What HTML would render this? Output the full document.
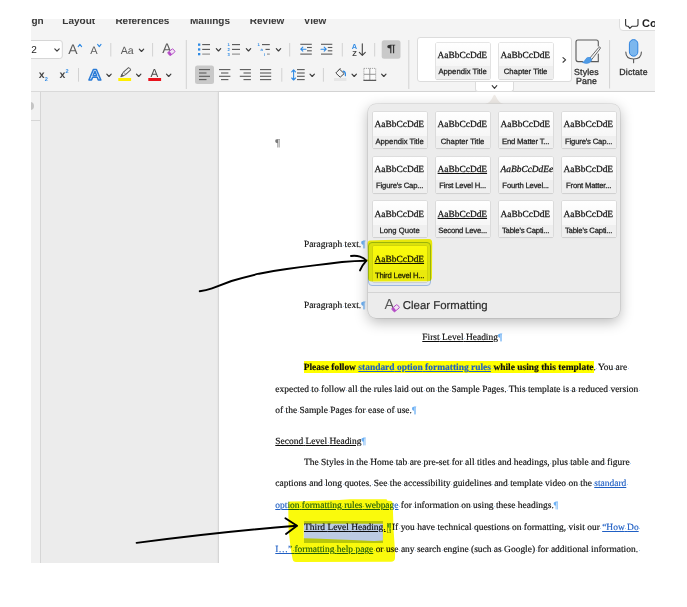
<!DOCTYPE html>
<html lang="en"><head><meta charset="utf-8"><title>Word styles gallery</title>
<style>
*{box-sizing:border-box}
html,body{margin:0;padding:0}
body{text-rendering:geometricPrecision;width:687px;height:607px;background:#fff;position:relative;overflow:hidden;font-family:"Liberation Sans",sans-serif}
#shot{position:absolute;left:0;top:0;width:687px;height:607px;clip-path:inset(19px 32px 44px 31px);background:#ececec}
.abs{position:absolute}
#ribbon{left:31px;top:19px;width:624px;height:72px;background:#f4f4f4}
#ribline{left:31px;top:91px;width:624px;height:1px;background:#d9d9d9}
.tab{top:14.9px;font-weight:bold;font-size:10px;color:#3a3a3a;white-space:nowrap;line-height:14px}
#ruler{left:31px;top:92px;width:9px;height:471px;background:#f1f1f1}
#rulerline{left:40px;top:92px;width:1px;height:471px;background:#d6d6d6}
#page{left:219px;top:92px;width:440px;height:475px;background:#fff;box-shadow:-.6px 0 0 #d0d0d0,-1.5px 0 2px rgba(0,0,0,.08)}
.t{position:absolute;white-space:pre;font-family:"Liberation Serif",serif;font-size:9.46px;line-height:12px;color:#0c0c0c;-webkit-text-stroke-width:.15px}
.t u{text-decoration-thickness:0.6px;text-underline-offset:1px}
.pm{color:#6cb0f4}
.lk{color:#1f5fc4;text-decoration:underline;text-decoration-thickness:0.6px;text-underline-offset:1px}
.hl{background:#ffff00;padding:2px 0 0}
.sp{background:linear-gradient(#a6d0f8,#a6d0f8) 50% 56%/1px 1px no-repeat}
.pmb{color:#5aa0ee;box-shadow:inset 0 0 0 .6px #707a10;margin:0 -1.6px 0 1.2px}
.sel{background:#b9c9de}
#gal{left:416.8px;top:36.8px;width:155.4px;height:45.7px;background:#fff;border:1px solid #dcdcdc;border-radius:3px}
#galtab{left:475px;top:81.5px;width:38.5px;height:10.5px;background:#fff;border:1px solid #dcdcdc;border-top:none;border-radius:0 0 3px 3px}
#pop{left:368px;top:103.5px;width:252px;height:214px;background:#ececec;border-radius:8px;box-shadow:0 4px 14px rgba(0,0,0,.28),0 0 0 .5px rgba(0,0,0,.14)}
#poparrow{left:484.5px;top:94.3px;width:19px;height:9.5px}
.tile{position:absolute;width:54px;height:36px;background:linear-gradient(#fff,#f7f7f7 62%);border-radius:1px;box-shadow:0 0 0 .6px #d0d0d0,0 .6px .8px rgba(0,0,0,.12);overflow:hidden}
.tile .pv{position:absolute;left:2px;top:0;width:60px;height:23px;text-align:left;font-family:"Liberation Serif",serif;font-size:9.4px;line-height:12px;padding-top:7.4px;color:#111;white-space:nowrap;-webkit-text-stroke-width:.25px}
.tile .pv u{text-decoration-thickness:.8px;text-underline-offset:1px}
.tile .lb{position:absolute;left:-3px;top:23.9px;width:60px;height:13px;background:#efefef;text-align:center;font-size:7.7px;line-height:12px;padding-top:0;color:#1c1c1c;white-space:nowrap;-webkit-text-stroke-width:.25px}
.rl{font-size:8.8px;line-height:8.8px;color:#2e2e2e;-webkit-text-stroke-width:.3px;text-align:center;white-space:nowrap;letter-spacing:.15px}
#popsep{left:368px;top:291.5px;width:252px;height:1px;background:#d4d4d4}
#clearfmt{left:402.8px;top:299px;font-size:11.4px;line-height:14px;color:#2c2c2c;white-space:nowrap;-webkit-text-stroke-width:.2px}
#cobtn{left:619px;top:10px;width:46px;height:21px;background:#fff;border:1px solid #dedede;border-radius:0 0 0 4px}
#cotxt{left:642px;top:17.6px;font-size:11px;line-height:12px;font-weight:bold;color:#222}
</style></head>
<body>
<div id="shot">
<div id="ribbon" class="abs"></div>
<div id="ribline" class="abs"></div>
<div class="abs tab" style="left:31.5px">gn</div>
<div class="abs tab" style="left:62.3px">Layout</div>
<div class="abs tab" style="left:115.4px">References</div>
<div class="abs tab" style="left:190px">Mailings</div>
<div class="abs tab" style="left:249.8px">Review</div>
<div class="abs tab" style="left:303.7px">View</div>
<div id="ruler" class="abs"></div><div id="rulerline" class="abs"></div>
<div class="abs" style="left:31px;top:120px;width:9px;height:1px;background:#d6d6d6"></div>
<div class="abs" style="left:26px;top:102px;width:8px;height:8px;border-radius:4px;background:#c4c4c4"></div>
<div id="page" class="abs"></div>
<div id="gal" class="abs"></div><div id="galtab" class="abs"></div>
<div class="tile " style="left:435.6px;top:42.6px"><div class="pv">AaBbCcDdE</div><div class="lb">Appendix Title</div></div>
<div class="tile " style="left:498.6px;top:42.6px"><div class="pv">AaBbCcDdE</div><div class="lb">Chapter Title</div></div>
<div class="abs rl" style="left:566px;top:68.3px;width:41px">Styles<br>Pane</div>
<div class="abs rl" style="left:613px;top:68.3px;width:41px">Dictate</div>
<div id="cobtn" class="abs"></div><div id="cotxt" class="abs">Co</div>
<svg class="abs" style="left:0;top:0" width="687" height="607" viewBox="0 0 687 607" font-family="Liberation Sans, sans-serif">
<rect x="20" y="40.5" width="42.3" height="18" rx="2.5" fill="#fff" stroke="#d6d6d6" stroke-width="1"/>
<text x="31.2" y="53.4" font-size="10" fill="#222">2</text>
<polyline points="54.80,48.80 57.00,51.20 59.20,48.80" fill="none" stroke="#3c3c3c" stroke-width="1.15" stroke-linecap="round" stroke-linejoin="round"/>
<text x="68.3" y="53.6" font-size="14" fill="#5c5c5c">A</text>
<polyline points="78.2,46.6 79.9,44.4 81.6,46.6" fill="none" stroke="#2f8ae4" stroke-width="1.1" stroke-linecap="round" stroke-linejoin="round"/>
<text x="90.2" y="53.6" font-size="11" fill="#5c5c5c">A</text>
<polyline points="97.6,44.4 99.3,46.6 101,44.4" fill="none" stroke="#2f8ae4" stroke-width="1.1" stroke-linecap="round" stroke-linejoin="round"/>
<line x1="110.8" y1="43" x2="110.8" y2="56.5" stroke="#d2d2d2" stroke-width="1"/>
<text x="120.8" y="53.6" font-size="10.6" fill="#5c5c5c">Aa</text>
<polyline points="139.30,49.10 141.50,51.50 143.70,49.10" fill="none" stroke="#3c3c3c" stroke-width="1.15" stroke-linecap="round" stroke-linejoin="round"/>
<line x1="152.6" y1="43" x2="152.6" y2="56.5" stroke="#d2d2d2" stroke-width="1"/>
<text x="162.3" y="53.4" font-size="14" fill="#5c5c5c">A</text>
<g transform="translate(171.4,52.2) rotate(-38)"><rect x="-3.3" y="-2" width="6.6" height="4" rx="0.8" fill="#f1e4f4" stroke="#b44cc6" stroke-width="0.9"/><rect x="-3.3" y="-2" width="2.4" height="4" fill="#b44cc6"/></g>
<line x1="186.3" y1="40" x2="186.3" y2="89" stroke="#d2d2d2" stroke-width="1"/>
<rect x="198" y="43.5" width="2.3" height="2.3" fill="#2f8ae4"/>
<line x1="202.2" y1="44.6" x2="210" y2="44.6" stroke="#555" stroke-width="1.1"/>
<rect x="198" y="48.3" width="2.3" height="2.3" fill="#2f8ae4"/>
<line x1="202.2" y1="49.4" x2="210" y2="49.4" stroke="#555" stroke-width="1.1"/>
<rect x="198" y="53.0" width="2.3" height="2.3" fill="#2f8ae4"/>
<line x1="202.2" y1="54.1" x2="210" y2="54.1" stroke="#8a8a8a" stroke-width="1.1"/>
<polyline points="216.30,48.60 218.50,51.00 220.70,48.60" fill="none" stroke="#3c3c3c" stroke-width="1.15" stroke-linecap="round" stroke-linejoin="round"/>
<text x="227.4" y="46.1" font-size="4.2" font-weight="bold" fill="#2f8ae4">1</text>
<line x1="232" y1="44.6" x2="240" y2="44.6" stroke="#555" stroke-width="1.1"/>
<text x="227.4" y="50.9" font-size="4.2" font-weight="bold" fill="#2f8ae4">2</text>
<line x1="232" y1="49.4" x2="240" y2="49.4" stroke="#555" stroke-width="1.1"/>
<text x="227.4" y="55.6" font-size="4.2" font-weight="bold" fill="#2f8ae4">3</text>
<line x1="232" y1="54.1" x2="240" y2="54.1" stroke="#8a8a8a" stroke-width="1.1"/>
<polyline points="246.30,48.60 248.50,51.00 250.70,48.60" fill="none" stroke="#3c3c3c" stroke-width="1.15" stroke-linecap="round" stroke-linejoin="round"/>
<text x="257.6" y="46.1" font-size="4.2" font-weight="bold" fill="#2f8ae4">1</text>
<line x1="262" y1="44.6" x2="269.8" y2="44.6" stroke="#555" stroke-width="1.1"/>
<text x="260.6" y="50.9" font-size="4.2" font-weight="bold" fill="#2f8ae4">a</text>
<line x1="265.5" y1="49.4" x2="269.8" y2="49.4" stroke="#555" stroke-width="1.1"/>
<text x="264" y="55.6" font-size="4.2" font-weight="bold" fill="#2f8ae4">i</text>
<line x1="267" y1="54.1" x2="269.8" y2="54.1" stroke="#8a8a8a" stroke-width="1.1"/>
<polyline points="276.30,48.60 278.50,51.00 280.70,48.60" fill="none" stroke="#3c3c3c" stroke-width="1.15" stroke-linecap="round" stroke-linejoin="round"/>
<line x1="289.7" y1="43" x2="289.7" y2="56.5" stroke="#d2d2d2" stroke-width="1"/>
<line x1="300.3" y1="44.3" x2="311.8" y2="44.3" stroke="#5a5a5a" stroke-width="1.1"/>
<line x1="307" y1="47.5" x2="311.8" y2="47.5" stroke="#5a5a5a" stroke-width="1.1"/>
<line x1="307" y1="50.8" x2="311.8" y2="50.8" stroke="#5a5a5a" stroke-width="1.1"/>
<line x1="300.3" y1="54.1" x2="311.8" y2="54.1" stroke="#5a5a5a" stroke-width="1.1"/>
<path d="M306 49.2H300.8M302.8 47.2l-2 2 2 2" fill="none" stroke="#2f8ae4" stroke-width="1.1" stroke-linecap="round" stroke-linejoin="round"/>
<line x1="321" y1="44.3" x2="332.3" y2="44.3" stroke="#5a5a5a" stroke-width="1.1"/>
<line x1="327.8" y1="47.5" x2="332.3" y2="47.5" stroke="#5a5a5a" stroke-width="1.1"/>
<line x1="327.8" y1="50.8" x2="332.3" y2="50.8" stroke="#5a5a5a" stroke-width="1.1"/>
<line x1="321" y1="54.1" x2="332.3" y2="54.1" stroke="#5a5a5a" stroke-width="1.1"/>
<path d="M321 49.2H326.2M324.2 47.2l2 2 -2 2" fill="none" stroke="#2f8ae4" stroke-width="1.1" stroke-linecap="round" stroke-linejoin="round"/>
<line x1="342.3" y1="43" x2="342.3" y2="56.5" stroke="#d2d2d2" stroke-width="1"/>
<text x="351.8" y="48.6" font-size="7.4" font-weight="bold" fill="#2f8ae4">A</text>
<text x="352.2" y="56" font-size="7.4" font-weight="bold" fill="#444">Z</text>
<path d="M362.3 43.8V55.3M359.3 52.3l3 3.1 3-3.1" fill="none" stroke="#444" stroke-width="1.1" stroke-linecap="round" stroke-linejoin="round"/>
<line x1="374.7" y1="43" x2="374.7" y2="56.5" stroke="#d2d2d2" stroke-width="1"/>
<rect x="381.7" y="40.2" width="18.8" height="18.6" rx="2.5" fill="#c9c9c9"/>
<text x="386.8" y="52" font-size="10.4" font-weight="bold" fill="#333" textLength="9" lengthAdjust="spacingAndGlyphs">¶</text>
<line x1="408.8" y1="40" x2="408.8" y2="89" stroke="#d2d2d2" stroke-width="1"/>
<text x="38.8" y="78.2" font-size="10.5" font-weight="bold" fill="#444">x</text>
<text x="44.8" y="81" font-size="5.6" font-weight="bold" fill="#2f8ae4">2</text>
<text x="59.6" y="78.2" font-size="10.5" font-weight="bold" fill="#444">x</text>
<text x="65.6" y="73" font-size="5.6" font-weight="bold" fill="#2f8ae4">2</text>
<line x1="78.5" y1="68" x2="78.5" y2="81.7" stroke="#d2d2d2" stroke-width="1"/>
<text x="88.6" y="80.2" font-size="15.4" font-weight="bold" fill="#fff" stroke="#2a7bd6" stroke-width="1.35" stroke-linejoin="round" textLength="12.8" lengthAdjust="spacingAndGlyphs">A</text>
<polyline points="106.80,74.10 109.00,76.50 111.20,74.10" fill="none" stroke="#3c3c3c" stroke-width="1.15" stroke-linecap="round" stroke-linejoin="round"/>
<rect x="118.3" y="78" width="12.8" height="3" fill="#ffee00"/>
<g transform="translate(125.6,72.4) rotate(-42)" fill="#f4f4f4" stroke="#5a5a5a" stroke-width="0.95" stroke-linejoin="round"><path d="M-1.5 -1.6H5.4Q6.4 0 5.4 1.6H-1.5Z"/><path d="M-1.5 -1.6L-4.2 -1V1L-1.5 1.6"/><path d="M-4.2 -0.9L-6.4 0 -4.2 0.9Z" fill="#5a5a5a"/></g>
<polyline points="136.50,74.10 138.70,76.50 140.90,74.10" fill="none" stroke="#3c3c3c" stroke-width="1.15" stroke-linecap="round" stroke-linejoin="round"/>
<text x="150.4" y="77" font-size="11.6" fill="#4a4a4a">A</text>
<rect x="148.3" y="78" width="12.8" height="3" fill="#e8121c"/>
<polyline points="166.50,74.10 168.70,76.50 170.90,74.10" fill="none" stroke="#3c3c3c" stroke-width="1.15" stroke-linecap="round" stroke-linejoin="round"/>
<rect x="195" y="65.4" width="19" height="18.5" rx="2.5" fill="#c9c9c9"/>
<line x1="199" y1="69.6" x2="210" y2="69.6" stroke="#5a5a5a" stroke-width="1.1"/>
<line x1="199" y1="73" x2="206.5" y2="73" stroke="#5a5a5a" stroke-width="1.1"/>
<line x1="199" y1="76.3" x2="210" y2="76.3" stroke="#5a5a5a" stroke-width="1.1"/>
<line x1="199" y1="79.6" x2="206.5" y2="79.6" stroke="#5a5a5a" stroke-width="1.1"/>
<line x1="219" y1="69.6" x2="230.4" y2="69.6" stroke="#5a5a5a" stroke-width="1.1"/>
<line x1="221" y1="73" x2="228.4" y2="73" stroke="#5a5a5a" stroke-width="1.1"/>
<line x1="219" y1="76.3" x2="230.4" y2="76.3" stroke="#5a5a5a" stroke-width="1.1"/>
<line x1="221" y1="79.6" x2="228.4" y2="79.6" stroke="#5a5a5a" stroke-width="1.1"/>
<line x1="239.8" y1="69.6" x2="250.9" y2="69.6" stroke="#5a5a5a" stroke-width="1.1"/>
<line x1="243.5" y1="73" x2="250.9" y2="73" stroke="#5a5a5a" stroke-width="1.1"/>
<line x1="239.8" y1="76.3" x2="250.9" y2="76.3" stroke="#5a5a5a" stroke-width="1.1"/>
<line x1="243.5" y1="79.6" x2="250.9" y2="79.6" stroke="#5a5a5a" stroke-width="1.1"/>
<line x1="260" y1="69.6" x2="271.2" y2="69.6" stroke="#5a5a5a" stroke-width="1.1"/>
<line x1="260" y1="73" x2="271.2" y2="73" stroke="#5a5a5a" stroke-width="1.1"/>
<line x1="260" y1="76.3" x2="271.2" y2="76.3" stroke="#5a5a5a" stroke-width="1.1"/>
<line x1="260" y1="79.6" x2="271.2" y2="79.6" stroke="#5a5a5a" stroke-width="1.1"/>
<line x1="281.8" y1="68" x2="281.8" y2="81.7" stroke="#d2d2d2" stroke-width="1"/>
<line x1="297" y1="69.6" x2="304.7" y2="69.6" stroke="#5a5a5a" stroke-width="1.1"/>
<line x1="297" y1="73" x2="304.7" y2="73" stroke="#5a5a5a" stroke-width="1.1"/>
<line x1="297" y1="76.3" x2="304.7" y2="76.3" stroke="#5a5a5a" stroke-width="1.1"/>
<line x1="297" y1="79.6" x2="304.7" y2="79.6" stroke="#5a5a5a" stroke-width="1.1"/>
<path d="M293.6 70V79.8M291.7 71.8l1.9-2 1.9 2M291.7 78l1.9 2 1.9-2" fill="none" stroke="#2f8ae4" stroke-width="1.1" stroke-linecap="round" stroke-linejoin="round"/>
<polyline points="310.00,74.10 312.20,76.50 314.40,74.10" fill="none" stroke="#3c3c3c" stroke-width="1.15" stroke-linecap="round" stroke-linejoin="round"/>
<line x1="323.4" y1="68" x2="323.4" y2="81.7" stroke="#d2d2d2" stroke-width="1"/>
<rect x="334" y="78" width="12.4" height="3" fill="#e6e6e6"/>
<path d="M339.6 69.2l4.6 4.4-4 3.6-4.4-4.2z" fill="#f4f4f4" stroke="#4a4a4a" stroke-width="1" stroke-linejoin="round"/>
<path d="M338.6 70.2l1.6-1.6" fill="none" stroke="#4a4a4a" stroke-width="1" stroke-linecap="round"/>
<path d="M343.2 71.2q2.6 0.6 2.2 4.4" fill="none" stroke="#2f8ae4" stroke-width="1.2" stroke-linecap="round"/>
<polyline points="352.00,74.10 354.20,76.50 356.40,74.10" fill="none" stroke="#3c3c3c" stroke-width="1.15" stroke-linecap="round" stroke-linejoin="round"/>
<rect x="363.9" y="68.4" width="11.8" height="11.8" fill="#fafafa" stroke="#8c8c8c" stroke-width="0.9" stroke-dasharray="1 1"/>
<path d="M369.8 68.4V80.2M363.9 74.3H375.7" stroke="#8c8c8c" stroke-width="0.9" fill="none"/>
<line x1="363.4" y1="80.4" x2="376.2" y2="80.4" stroke="#5a5a5a" stroke-width="1.2"/>
<polyline points="381.60,74.10 383.80,76.50 386.00,74.10" fill="none" stroke="#3c3c3c" stroke-width="1.15" stroke-linecap="round" stroke-linejoin="round"/>
</svg>
<svg class="abs" style="left:0;top:0" width="687" height="607" viewBox="0 0 687 607">
<polyline points="563,57.6 565.6,59.9 563,62.2" fill="none" stroke="#3c3c3c" stroke-width="1.2" stroke-linecap="round" stroke-linejoin="round"/>
<polyline points="492.20,85.70 494.50,88.30 496.80,85.70" fill="none" stroke="#3c3c3c" stroke-width="1.15" stroke-linecap="round" stroke-linejoin="round"/>
<line x1="609.6" y1="40" x2="609.6" y2="88.5" stroke="#d2d2d2" stroke-width="1"/>
<path d="M590.5 61.6H598.3V54M598.3 46V42Q598.3 40 596.3 40H578Q576 40 576 42V59.6Q576 61.6 578 61.6H582.5" fill="none" stroke="#5a5a5a" stroke-width="1.1" stroke-linecap="round"/>
<path d="M589.6 58.4L598.6 47.6Q599.6 46.6 600.2 47.3Q600.7 48 599.9 49L591.4 59.9Z" fill="#f4f4f4" stroke="#5a5a5a" stroke-width="0.9" stroke-linejoin="round"/>
<path d="M590.6 57.6Q587 56.4 585.4 59.4Q584.6 61.6 582.4 62.4Q586.6 64.6 589.8 62.6Q592 61 591.6 59.2Z" fill="#4e9be6" stroke="#2f7fd6" stroke-width="0.5"/>
<rect x="629.4" y="39.6" width="8.4" height="16.6" rx="4.2" fill="#7cb7ee" stroke="#2f83de" stroke-width="1"/>
<path d="M625.8 52Q625.8 59 633.6 59Q641.4 59 641.4 52M633.6 59V62.8" fill="none" stroke="#5a5a5a" stroke-width="1.1" stroke-linecap="round"/>
<path d="M625.6 17V24.6Q625.6 26.3 627.2 26.3H628.3L629.9 28.4L631.9 26.3H636.3Q638 26.3 638 24.6V17" fill="none" stroke="#333" stroke-width="1.1" stroke-linejoin="round"/>
</svg>
<div class="t" style="left:275.2px;top:137.5px;color:#7a7a7a;font-size:10.5px">¶</div>
<div class="abs" style="left:303.7px;top:521.2px;width:79.3px;height:21.4px;background:#bccbe3"></div>
<div class="t" style="left:303.9px;top:239.40px">Paragraph<span class="sp"> </span>text.<span class="pm">¶</span></div>
<div class="t" style="left:303.9px;top:300.40px">Paragraph<span class="sp"> </span>text.<span class="pm">¶</span></div>
<div class="t" style="left:422.3px;top:331.90px"><u>First<span class="sp"> </span>Level<span class="sp"> </span>Heading</u><span class="pm">¶</span></div>
<div class="t" style="left:303.7px;top:361.90px"><span class="hl"><b>Please<span class="sp"> </span>follow<span class="sp"> </span><span class="lk">standard<span class="sp"> </span>option<span class="sp"> </span>formatting<span class="sp"> </span>rules</span><span class="sp"> </span>while<span class="sp"> </span>using<span class="sp"> </span>this<span class="sp"> </span>template</b></span>.<span class="sp"> </span>You<span class="sp"> </span>are<span class="sp"> </span></div>
<div class="t" style="left:275.3px;top:383.90px">expected<span class="sp"> </span>to<span class="sp"> </span>follow<span class="sp"> </span>all<span class="sp"> </span>the<span class="sp"> </span>rules<span class="sp"> </span>laid<span class="sp"> </span>out<span class="sp"> </span>on<span class="sp"> </span>the<span class="sp"> </span>Sample<span class="sp"> </span>Pages.<span class="sp"> </span>This<span class="sp"> </span>template<span class="sp"> </span>is<span class="sp"> </span>a<span class="sp"> </span>reduced<span class="sp"> </span>version<span class="sp"> </span></div>
<div class="t" style="left:275.3px;top:405.30px">of<span class="sp"> </span>the<span class="sp"> </span>Sample<span class="sp"> </span>Pages<span class="sp"> </span>for<span class="sp"> </span>ease<span class="sp"> </span>of<span class="sp"> </span>use.<span class="pm">¶</span></div>
<div class="t" style="left:275.3px;top:435.90px"><u>Second<span class="sp"> </span>Level<span class="sp"> </span>Heading</u><span class="pm">¶</span></div>
<div class="t" style="left:304px;top:456.80px">The<span class="sp"> </span>Styles<span class="sp"> </span>in<span class="sp"> </span>the<span class="sp"> </span>Home<span class="sp"> </span>tab<span class="sp"> </span>are<span class="sp"> </span>pre-set<span class="sp"> </span>for<span class="sp"> </span>all<span class="sp"> </span>titles<span class="sp"> </span>and<span class="sp"> </span>headings,<span class="sp"> </span>plus<span class="sp"> </span>table<span class="sp"> </span>and<span class="sp"> </span>figure<span class="sp"> </span></div>
<div class="t" style="left:275.3px;top:478.30px">captions<span class="sp"> </span>and<span class="sp"> </span>long<span class="sp"> </span>quotes.<span class="sp"> </span>See<span class="sp"> </span>the<span class="sp"> </span>accessibility<span class="sp"> </span>guidelines<span class="sp"> </span>and<span class="sp"> </span>template<span class="sp"> </span>video<span class="sp"> </span>on<span class="sp"> </span>the<span class="sp"> </span><span class="lk">standard</span><span class="sp"> </span></div>
<div class="t" style="left:275.3px;top:499.60px"><span class="lk">option<span class="sp"> </span>formatting<span class="sp"> </span>rules<span class="sp"> </span>webpage</span><span class="sp"> </span>for<span class="sp"> </span>information<span class="sp"> </span>on<span class="sp"> </span>using<span class="sp"> </span>these<span class="sp"> </span>headings.<span class="pm">¶</span></div>
<div class="t" style="left:304px;top:521.80px"><u>Third<span class="sp"> </span>Level<span class="sp"> </span>Heading.</u><span class="pmb">¶</span><span class="sp"> </span>If<span class="sp"> </span>you<span class="sp"> </span>have<span class="sp"> </span>technical<span class="sp"> </span>questions<span class="sp"> </span>on<span class="sp"> </span>formatting,<span class="sp"> </span>visit<span class="sp"> </span>our<span class="sp"> </span><span class="lk">“How<span class="sp"> </span>Do</span><span class="sp"> </span></div>
<div class="t" style="left:275.3px;top:544.00px"><span class="lk">I…”<span class="sp"> </span>formatting<span class="sp"> </span>help<span class="sp"> </span>page</span><span class="sp"> </span>or<span class="sp"> </span>use<span class="sp"> </span>any<span class="sp"> </span>search<span class="sp"> </span>engine<span class="sp"> </span>(such<span class="sp"> </span>as<span class="sp"> </span>Google)<span class="sp"> </span>for<span class="sp"> </span>additional<span class="sp"> </span>information.<span class="sp"> </span></div>
<svg id="poparrow" class="abs" viewBox="0 0 19 9.5"><path d="M0 9.5C4.5 9.5 6 6.5 8.4 1.8Q9.5 -0.4 10.6 1.8C13 6.5 14.5 9.5 19 9.5Z" fill="#f0ece8"/></svg>
<div id="pop" class="abs"></div>
<div class="abs" style="left:368.4px;top:242.4px;width:62.6px;height:43.8px;border:1px solid #9db7df;border-radius:4px;background:#dfe6f1"></div>
<div class="tile " style="left:372.6px;top:111.8px"><div class="pv">AaBbCcDdE</div><div class="lb">Appendix Title</div></div>
<div class="tile " style="left:435.6px;top:111.8px"><div class="pv">AaBbCcDdE</div><div class="lb">Chapter Title</div></div>
<div class="tile " style="left:498.6px;top:111.8px"><div class="pv">AaBbCcDdE</div><div class="lb" style="letter-spacing:-.18px">End Matter T...</div></div>
<div class="tile " style="left:561.6px;top:111.8px"><div class="pv">AaBbCcDdE</div><div class="lb" style="letter-spacing:-.18px">Figure's Cap...</div></div>
<div class="tile " style="left:372.6px;top:156.6px"><div class="pv">AaBbCcDdE</div><div class="lb" style="letter-spacing:-.18px">Figure's Cap...</div></div>
<div class="tile " style="left:435.6px;top:156.6px"><div class="pv"><u>AaBbCcDdE</u></div><div class="lb" style="letter-spacing:-.18px">First Level H...</div></div>
<div class="tile " style="left:498.6px;top:156.6px"><div class="pv"><i>AaBbCcDdEe</i></div><div class="lb" style="letter-spacing:-.18px">Fourth Level...</div></div>
<div class="tile " style="left:561.6px;top:156.6px"><div class="pv">AaBbCcDdE</div><div class="lb" style="letter-spacing:-.18px">Front Matter...</div></div>
<div class="tile " style="left:372.6px;top:201.4px"><div class="pv">AaBbCcDdE</div><div class="lb">Long Quote</div></div>
<div class="tile " style="left:435.6px;top:201.4px"><div class="pv"><u>AaBbCcDdE</u></div><div class="lb" style="letter-spacing:-.18px">Second Leve...</div></div>
<div class="tile " style="left:498.6px;top:201.4px"><div class="pv">AaBbCcDdE</div><div class="lb" style="letter-spacing:-.18px">Table's Capti...</div></div>
<div class="tile " style="left:561.6px;top:201.4px"><div class="pv">AaBbCcDdE</div><div class="lb" style="letter-spacing:-.18px">Table's Capti...</div></div>
<div class="tile " style="left:372.6px;top:246.2px"><div class="pv"><u>AaBbCcDdE</u></div><div class="lb" style="letter-spacing:-.18px">Third Level H...</div></div>
<div id="popsep" class="abs"></div>
<div id="clearfmt" class="abs">Clear Formatting</div>
<svg class="abs" style="left:0;top:0" width="687" height="607" viewBox="0 0 687 607" font-family="Liberation Sans, sans-serif"><text x="384.4" y="308.8" font-size="14.4" fill="#595959">A</text><g transform="translate(395.6,308.2) rotate(-40)"><rect x="-3.5" y="-2.1" width="7" height="4.2" rx="0.8" fill="#f0e2f3" stroke="#b44cc6" stroke-width="0.9"/><rect x="-3.5" y="-2.1" width="2.6" height="4.2" fill="#b44cc6"/></g></svg>
<svg class="abs" style="left:0;top:0;mix-blend-mode:multiply" width="687" height="607" viewBox="0 0 687 607">
<path d="M370 240.6Q400 239.2 429 239Q432.2 239.2 432.2 243L432 277.5Q432 281 428 281.2L372 281.6Q368 281.6 368 278L368 262L366.8 260.4L368 258.6L367.6 244Q367.6 240.8 370 240.6Z" fill="#fafa0c"/>
<path fill-rule="evenodd" d="M288.2 503.4Q288 501.6 290 501.6L306 501.2L339 499.9L350 499.2L386.5 499.2L387.5 500.8L390.5 500.8Q392.6 500.8 392.7 503.5L393.6 530L395.1 553L395 558Q394.8 561.8 391 561.8L296 562Q293 562 292.6 559L292 556L290.5 546.7L288.6 529.5Z M303.7 523.7L382.9 523.8L382.9 540.6Q376 541.2 368 540.8Q352 539.8 338 539.4Q320 538.4 303.7 538.2Z" fill="#fafa0c"/>
</svg>
<svg class="abs" style="left:0;top:0" width="687" height="607" viewBox="0 0 687 607" fill="none" stroke="#000" stroke-width="1.9" stroke-linecap="round" stroke-linejoin="round">
<path d="M199.7 291.2Q206 290.6 212 288.4Q221 285 231.5 281Q245 277 259 273.7Q272 271 286.8 269Q300 267 314.4 265.4Q328 263.6 342 262Q355 260.8 366 260.7"/>
<path d="M351 256Q356 255.4 360 256.6Q364 258 366.4 260.6Q362.6 264.6 360 270.4"/>
<path d="M136.6 542.9Q219 532 296.6 525.7"/>
<path d="M285.4 518.3L297 525.7L286 534"/>
</svg>
</div>
</body></html>
